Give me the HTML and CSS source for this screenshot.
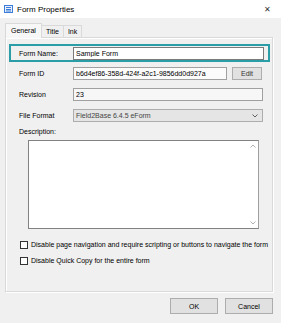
FILE: index.html
```html
<!DOCTYPE html>
<html lang="en">
<head>
    <meta charset="UTF-8">
    <meta name="viewport" content="width=device-width, initial-scale=1.0">
    <title>Form Properties</title>
    <link rel="stylesheet" href="styles.css">
</head>
<body>

    <div class="titlebar">
        <svg class="app-icon" width="9" height="8" viewBox="0 0 9 8">
            <rect x="0.5" y="0.5" width="8" height="7" fill="#e8f1fb" stroke="#3b7dd8"/>
            <line x1="2" y1="2.5" x2="7" y2="2.5" stroke="#3b7dd8"/>
            <line x1="2" y1="4.5" x2="7" y2="4.5" stroke="#3b7dd8"/>
            <line x1="2" y1="6" x2="7" y2="6" stroke="#3b7dd8"/>
        </svg>
        <span class="title">Form Properties</span>
        <span class="close">&#x2715;</span>
    </div>

    <div class="dialog">
        <div class="tabs">
            <div class="tab active">General</div>
            <div class="tab">Title</div>
            <div class="tab">Ink</div>
        </div>

        <div class="panel">
            <div class="highlight">
                <label>Form Name:</label>
                <input type="text" class="field name-field" value="Sample Form">
            </div>

            <div class="row">
                <label>Form ID</label>
                <input type="text" class="field id-field" value="b6d4ef86-358d-424f-a2c1-9856dd0d927a">
                <button class="btn edit-btn">Edit</button>
            </div>

            <div class="row">
                <label>Revision</label>
                <input type="text" class="field ro-field" value="23">
            </div>

            <div class="row">
                <label>File Format</label>
                <div class="select">
                    <span>Field2Base 6.4.5 eForm</span>
                    <svg width="6" height="4" viewBox="0 0 6 4"><path d="M0.5 0.5 L3 3 L5.5 0.5" fill="none" stroke="#606060"/></svg>
                </div>
            </div>

            <div class="desc-label">Description:</div>
            <div class="textarea">
                <div class="vscroll">
                    <svg width="6" height="4" viewBox="0 0 6 4"><path d="M0.5 3.5 L3 1 L5.5 3.5" fill="none" stroke="#b0b0b0"/></svg>
                    <svg width="6" height="4" viewBox="0 0 6 4"><path d="M0.5 0.5 L3 3 L5.5 0.5" fill="none" stroke="#b0b0b0"/></svg>
                </div>
            </div>

            <div class="checks">
                <div class="check"><span class="box"></span>Disable page navigation and require scripting or buttons to navigate the form</div>
                <div class="check"><span class="box"></span>Disable Quick Copy for the entire form</div>
            </div>
        </div>

        <div class="footer">
            <button class="btn action-btn">OK</button>
            <button class="btn action-btn">Cancel</button>
        </div>
    </div>

</body>
</html>
```

FILE: styles.css
```css
body {
    margin: 0;
    width: 281px;
    height: 323px;
    font-family: "Liberation Sans", Arial, sans-serif;
    font-size: 7px;
    color: #000;
    background-color: #f0f0f0;
    overflow: hidden;
}
.titlebar {
    height: 18px;
    background: #fff;
    display: flex;
    align-items: center;
    padding-left: 4px;
}
.app-icon {
    margin-right: 4px;
}
.title {
    font-size: 8px;
    flex: 1;
}
.close {
    font-size: 8px;
    width: 28px;
    text-align: center;
    color: #333;
}
.dialog {
    padding: 4px 8px 0 5px;
}
.tabs {
    display: flex;
    align-items: flex-end;
    height: 15px;
    padding-left: 1px;
}
.tab {
    height: 11px;
    line-height: 11px;
    padding: 0 4px;
    border: 1px solid #d9d9d9;
    border-bottom: none;
    background: #f0f0f0;
    margin-left: -1px;
}
.tab.active {
    height: 14px;
    line-height: 13px;
    background: #f7f7f7;
    position: relative;
    z-index: 1;
    margin-bottom: -1px;
    padding: 0 5px;
}
.panel {
    border: 1px solid #d9d9d9;
    background: #f0f0f0;
    box-shadow: inset 1px 1px 0 #fff, 1px 1px 0 #fff;
    padding: 6px 0 0 3px;
    box-sizing: border-box;
    height: 255px;
}
.highlight {
    width: 261px;
    height: 18px;
    box-sizing: border-box;
    border: 2px solid #2a9da6;
    display: flex;
    align-items: center;
    padding-left: 8px;
}
label {
    width: 54px;
    flex: none;
}
.field {
    font-family: inherit;
    font-size: 7px;
    height: 13px;
    box-sizing: border-box;
    border: 1px solid #7a7a7a;
    padding: 0 2px;
    background: #fff;
    color: #000;
    outline: none;
}
.name-field {
    width: 191px;
}
.row {
    display: flex;
    align-items: center;
    padding-left: 10px;
    margin-top: 5px;
    height: 13px;
}
.row + .row {
    margin-top: 8px;
}
.id-field {
    width: 154px;
    background: #fbfbfb;
    border-color: #a0a0a0;
}
.ro-field {
    width: 190px;
    background: #f7f7f7;
    border-color: #a0a0a0;
}
.btn {
    font-family: inherit;
    font-size: 7px;
    background: #e1e1e1;
    border: 1px solid #adadad;
    color: #000;
    padding: 0;
}
.edit-btn {
    width: 30px;
    height: 13px;
    margin-left: 5px;
    color: #333;
}
.select {
    width: 190px;
    height: 13px;
    box-sizing: border-box;
    border: 1px solid #adadad;
    background: #e5e5e5;
    display: flex;
    align-items: center;
    justify-content: space-between;
    padding: 0 4px 0 2px;
    color: #444;
}
.desc-label {
    padding-left: 10px;
    margin-top: 5px;
    height: 10px;
    line-height: 10px;
}
.textarea {
    margin: 3px 0 0 19px;
    width: 231px;
    height: 89px;
    box-sizing: border-box;
    border: 1px solid #828282;
    border-right-color: #a0a0a0;
    background: #fff;
    display: flex;
    justify-content: flex-end;
}
.vscroll {
    width: 10px;
    display: flex;
    flex-direction: column;
    justify-content: space-between;
    align-items: center;
    padding: 3px 0;
}
.checks {
    margin-top: 11px;
    padding-left: 11px;
    display: flex;
    flex-direction: column;
    gap: 7px;
}
.check {
    display: flex;
    align-items: center;
    height: 9px;
}
.box {
    width: 8px;
    height: 8px;
    box-sizing: border-box;
    border: 1px solid #333;
    background: #fff;
    margin-right: 3px;
}
.footer {
    display: flex;
    justify-content: flex-end;
    gap: 7px;
    margin-top: 6px;
}
.action-btn {
    width: 48px;
    height: 16px;
}
```
